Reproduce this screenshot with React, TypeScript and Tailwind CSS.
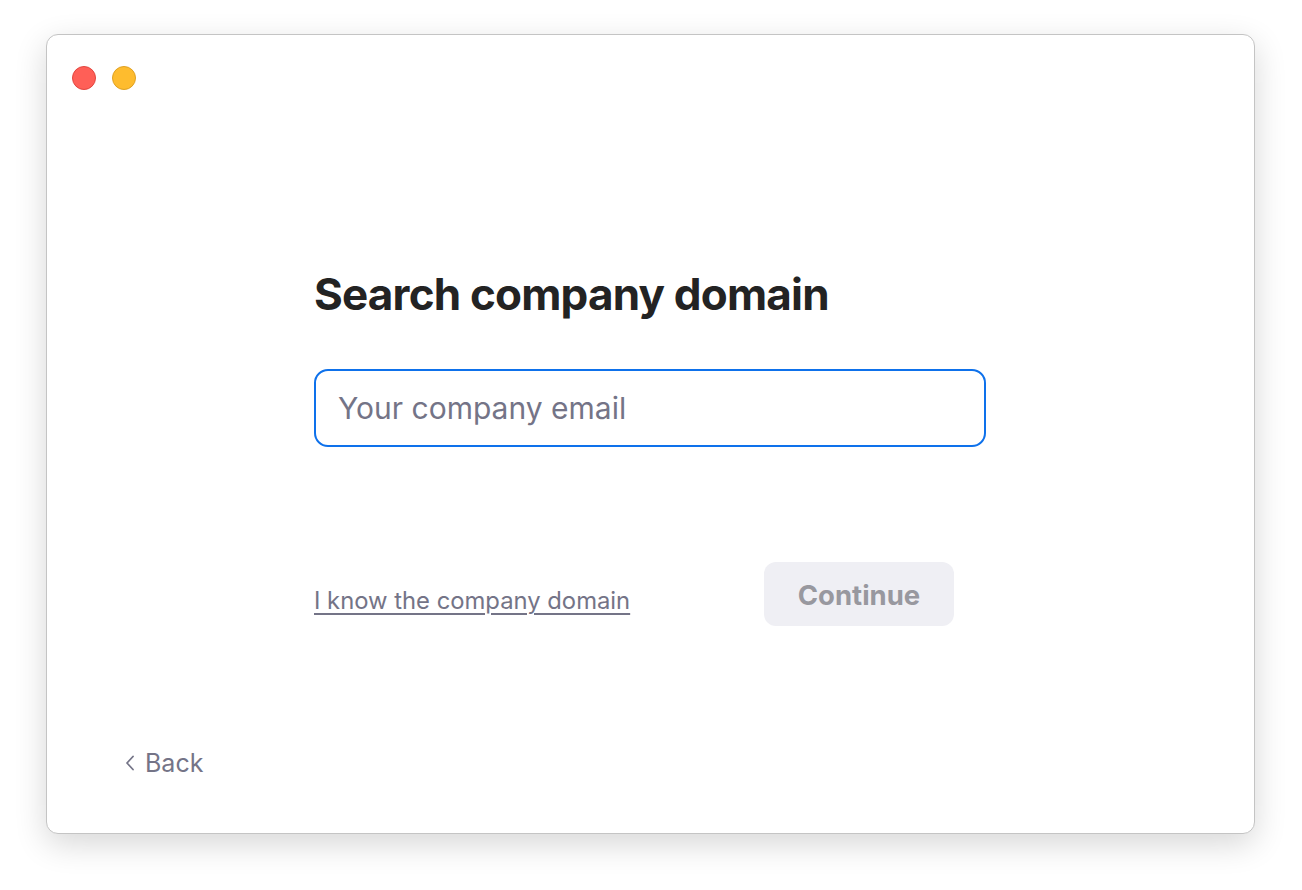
import React from "react";

export default function App() {
  return (
    <div className="w-[1302px] h-[890px] bg-white pt-[34px] pl-[46px]" style={{ fontFamily: "Inter, 'Noto Sans', sans-serif" }}>
      <div className="w-[1209px] h-[800px] bg-white rounded-[12px] border border-[#c4c4c4] shadow-[0_10px_32px_rgba(0,0,0,0.16)] flex flex-col">
        <div className="flex gap-[16px] pt-[31px] pl-[25px]">
          <div className="w-[24px] h-[24px] rounded-full bg-[#ff5f57] border border-[#e2463f]" />
          <div className="w-[24px] h-[24px] rounded-full bg-[#febc2e] border border-[#dfa123]" />
        </div>
        <div className="flex-1 flex flex-col pl-[267px]">
          <h1 className="mt-[178px] text-[44px] leading-[52px] font-bold text-[#232323] tracking-[-0.8px]">
            Search company domain
          </h1>
          <div className="mt-[49px] w-[672px] h-[78px] rounded-[14px] border-2 border-[#0e71eb] flex items-center pl-[22px]">
            <span className="text-[30px] text-[#747487]">Your company email</span>
          </div>
          <div className="mt-[115px] w-[672px] flex items-start justify-between pr-[32px]">
            <a className="mt-[25px] text-[23.8px] leading-[28px] text-[#747487] underline underline-offset-[4px] decoration-[2px]">
              I know the company domain
            </a>
            <button className="w-[190px] h-[64px] pt-[3px] rounded-[12px] bg-[#efeff4] text-[27.5px] font-bold text-[#98989f]">
              Continue
            </button>
          </div>
        </div>
        <div className="flex items-center gap-[10px] pl-[78px] pb-[55px] text-[#747487]">
          <svg width="10" height="16" viewBox="0 0 10 16" fill="none">
            <path d="M8 1.5L2 8l6 6.5" stroke="#747487" strokeWidth="1.8" strokeLinecap="round" strokeLinejoin="round" />
          </svg>
          <span className="text-[25px] leading-[30px]">Back</span>
        </div>
      </div>
    </div>
  );
}
